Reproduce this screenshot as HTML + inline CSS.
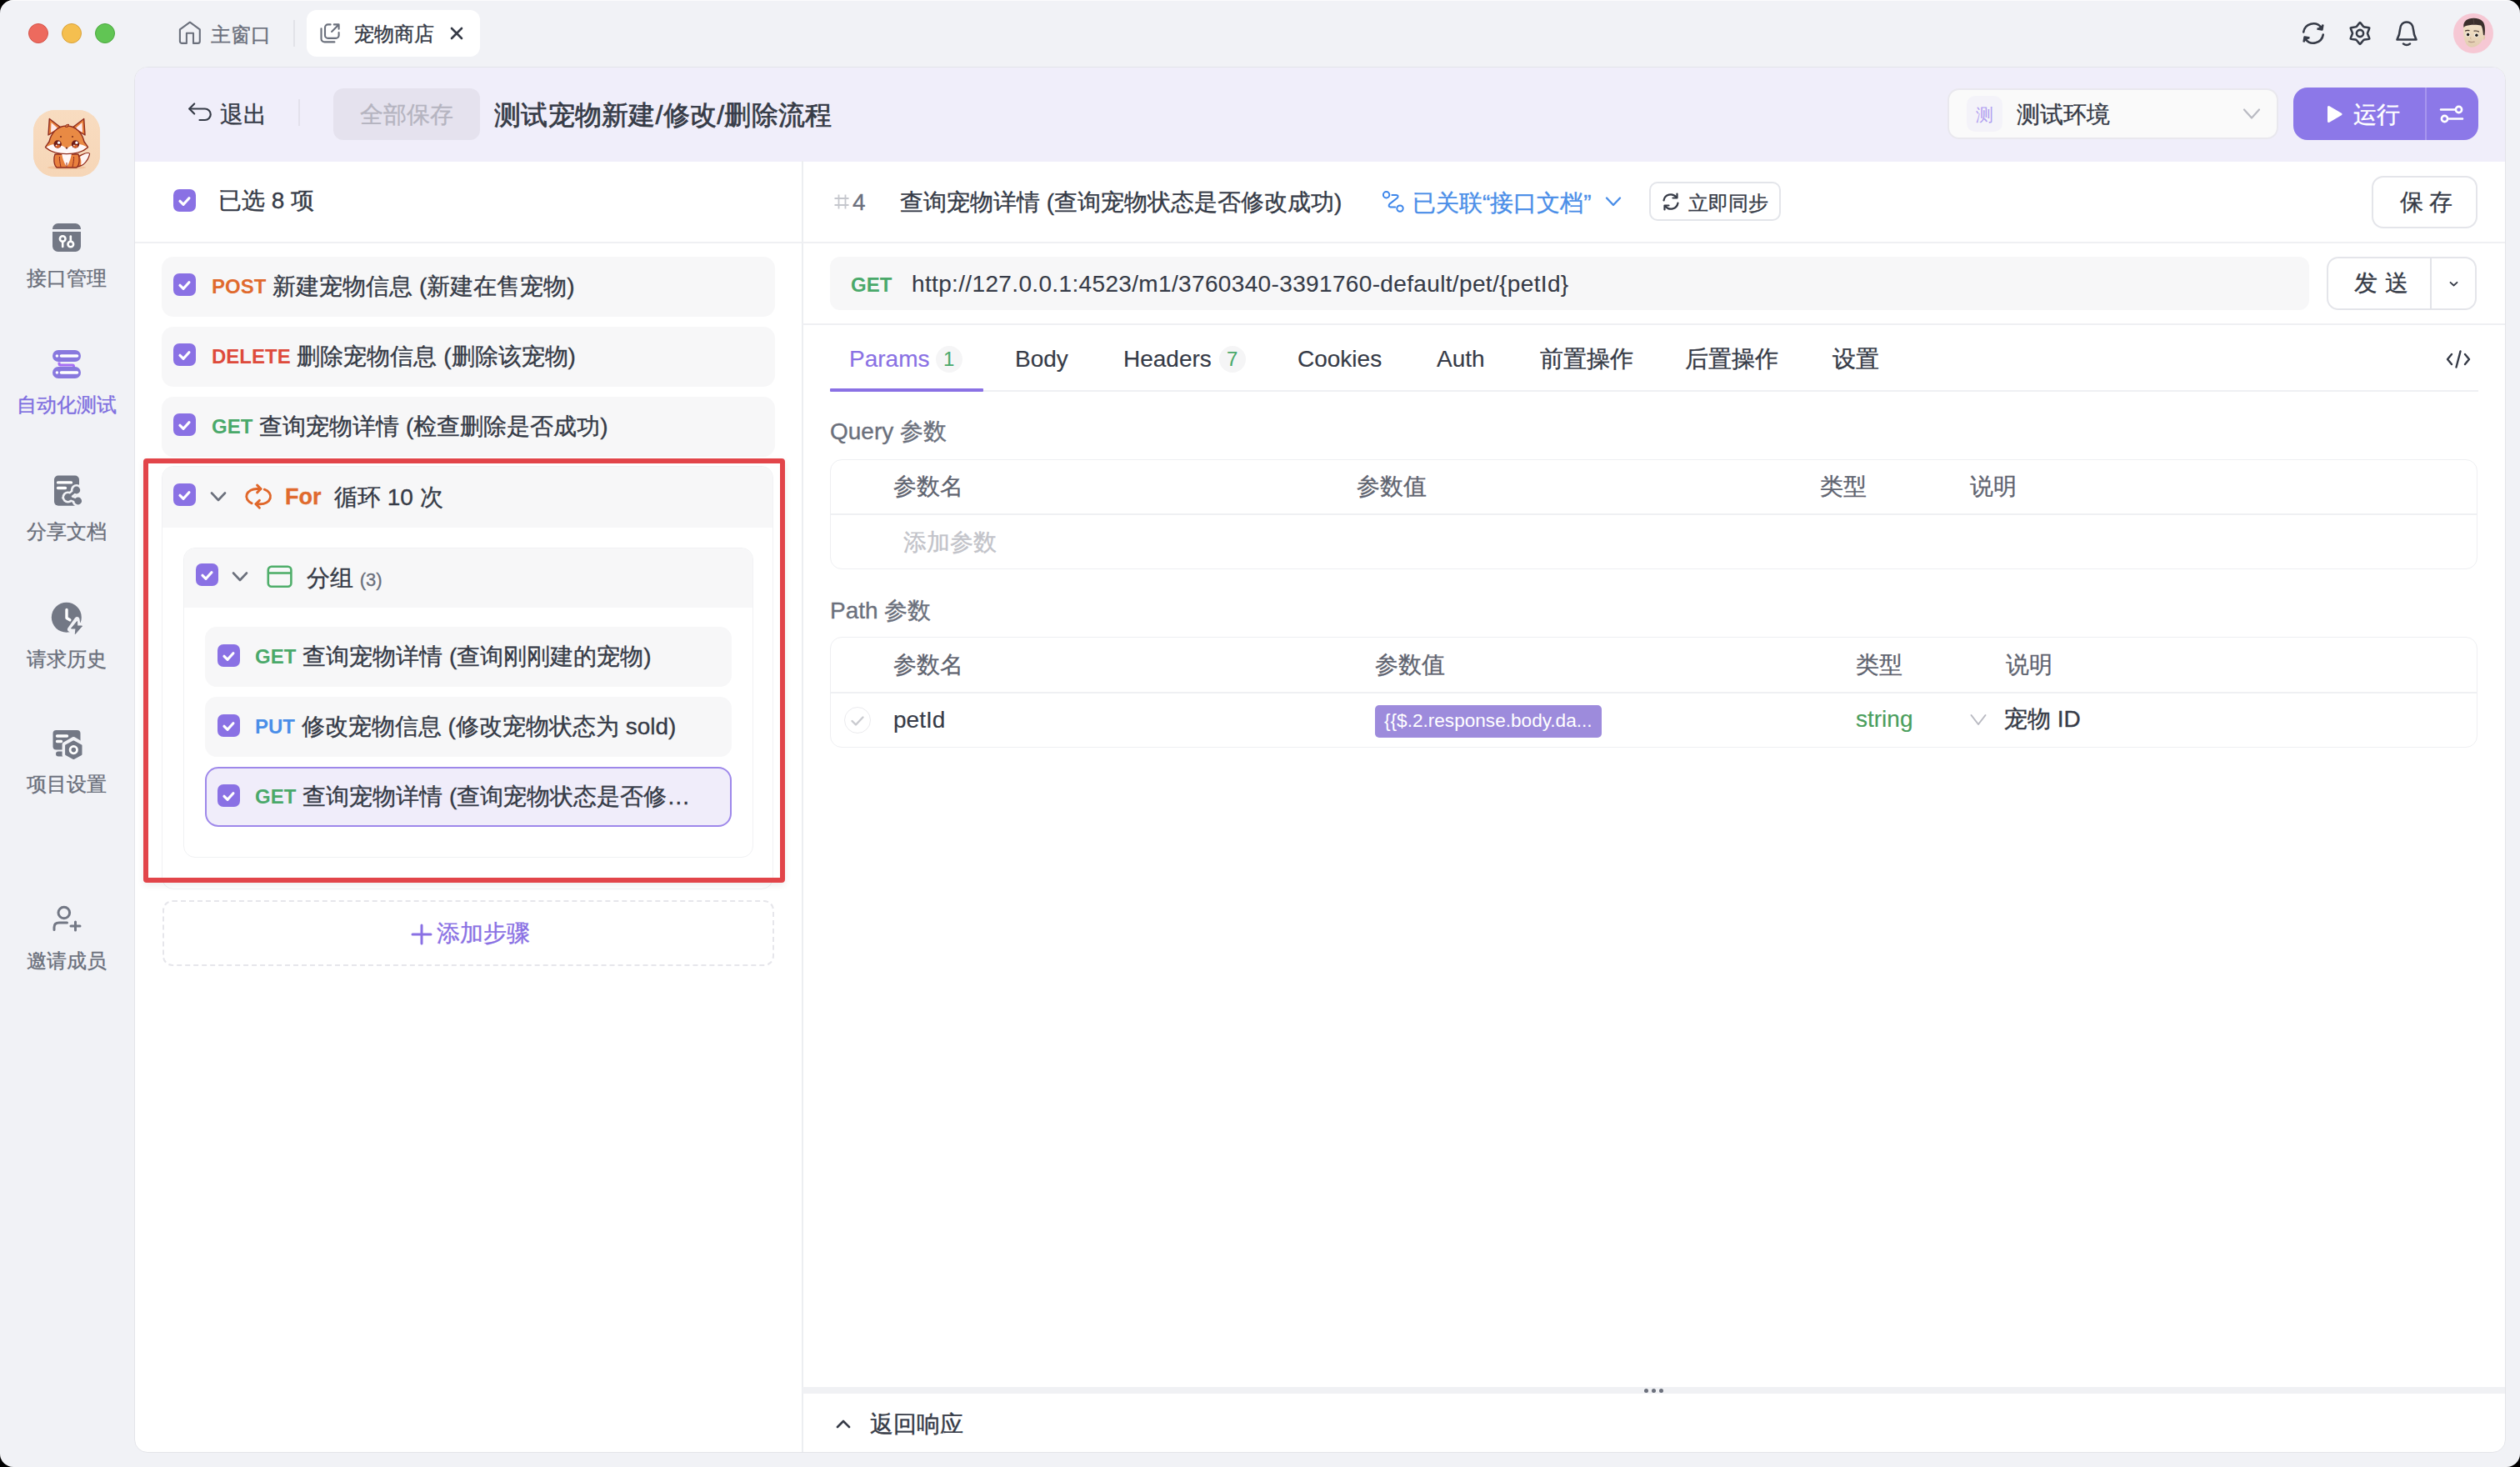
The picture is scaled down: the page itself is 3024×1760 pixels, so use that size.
<!DOCTYPE html>
<html><head><meta charset="utf-8">
<style>
*{box-sizing:border-box;margin:0;padding:0}
html,body{width:3024px;height:1760px;overflow:hidden;background:#000}
body{font-family:"Liberation Sans",sans-serif;color:#363b47;position:relative}
.win{position:absolute;left:0;top:0;width:3024px;height:1760px;border-radius:16px;background:#f1f2f6;overflow:hidden;box-shadow:inset 0 1px 0 rgba(255,255,255,0.7)}
.a{position:absolute;white-space:nowrap;line-height:1;-webkit-text-stroke-width:0.35px}
svg{position:absolute;overflow:visible}
.dot{position:absolute;width:24px;height:24px;border-radius:50%}
.panel{position:absolute;left:161px;top:80px;width:2846px;height:1663px;background:#fff;border:1.5px solid #e3e4e9;border-radius:16px;overflow:hidden}
.hdr{position:absolute;left:0;top:0;width:100%;height:113px;background:#f0eefa}
.side-t{font-size:24px;color:#6b707c;text-align:center;width:160px;left:0}
.card{position:absolute;background:#f7f7f8;border-radius:14px}
.cb{position:absolute;width:27px;height:27px;border-radius:7px;background:#8a71e4}

.m{font-weight:bold;font-size:24px;position:relative;top:-1.5px;-webkit-text-stroke-width:0}
.rt{font-size:28px;color:#363b47}
.th{font-size:28px;color:#5f6470;-webkit-text-stroke:0.3px #5f6470}
.sep{position:absolute;height:2px;background:#eff0f3}
</style></head>
<body>
<div class="win">
  <!-- traffic lights -->
  <div class="dot" style="left:34px;top:28px;background:#ed6a5e;border:1px solid #d4544a"></div>
  <div class="dot" style="left:74px;top:28px;background:#f5bf4f;border:1px solid #d9a23a"></div>
  <div class="dot" style="left:114px;top:28px;background:#61c554;border:1px solid #4aa83e"></div>

  <!-- tabs -->
  <svg style="left:205px;top:18px" width="50" height="44" viewBox="0 0 50 44"><path d="M13.5 33.9H18.9V21.7H27V33.9H32.3A2.5 2.5 0 0 0 34.8 31.4V17.4L22.9 8.7L10.9 17.4V31.4A2.5 2.5 0 0 0 13.5 33.9Z" fill="none" stroke="#6b707c" stroke-width="2.1" stroke-linejoin="round"/></svg>
  <div class="a" style="left:253px;top:29.5px;font-size:24px;color:#6b707c">主窗口</div>
  <div style="position:absolute;left:352px;top:24px;width:2px;height:32px;background:#e2e3e8"></div>
  <div style="position:absolute;left:368px;top:12px;width:208px;height:56px;background:#fff;border-radius:12px"></div>
  <svg style="left:375px;top:18px" width="50" height="44" viewBox="0 0 50 44"><path d="M21.6 11.4H18.5A3.5 3.5 0 0 0 15 14.9V24.4A3.5 3.5 0 0 0 18.5 27.9H28.1A3.5 3.5 0 0 0 31.6 24.4V21" fill="none" stroke="#6b707c" stroke-width="2.1" stroke-linecap="round"/><path d="M23.1 19.9L31 12M25.8 11.4H31.6V16.8" fill="none" stroke="#6b707c" stroke-width="2.1" stroke-linecap="round" stroke-linejoin="round"/><path d="M10.5 16.3V28.4A4 4 0 0 0 14.5 32.4H26.4" fill="none" stroke="#6b707c" stroke-width="2.1" stroke-linecap="round"/></svg>
  <div class="a" style="left:425px;top:29px;font-size:24px;color:#363b47">宠物商店</div>
  <svg style="left:541px;top:33px" width="14" height="14" viewBox="0 0 14 14"><path d="M1 1L13 13M13 1L1 13" stroke="#363b47" stroke-width="2.6" stroke-linecap="round"/></svg>

  <!-- top right icons -->
  <svg style="left:2762px;top:26px" width="28" height="28" viewBox="0 0 28 28"><path d="M2.2 12.5A12 12 0 0 1 23.5 7" fill="none" stroke="#363b47" stroke-width="2.6" stroke-linecap="round"/><path d="M25.5 3.5L24.5 9.5L18.5 8.5" fill="#363b47" stroke="#363b47" stroke-width="2.4" stroke-linejoin="round"/><path d="M25.8 15.5A12 12 0 0 1 4.5 21" fill="none" stroke="#363b47" stroke-width="2.6" stroke-linecap="round"/><path d="M2.5 24.5L3.5 18.5L9.5 19.5" fill="#363b47" stroke="#363b47" stroke-width="2.4" stroke-linejoin="round"/></svg>
  <svg style="left:2818px;top:25px" width="28" height="30" viewBox="0 0 28 30"><path d="M14.00 2.00C14.75 2.00 17.56 6.66 18.50 7.21C19.44 7.75 24.88 7.85 25.26 8.50C25.63 9.15 23.00 13.92 23.00 15.00C23.00 16.08 25.63 20.85 25.26 21.50C24.88 22.15 19.44 22.25 18.50 22.79C17.56 23.34 14.75 28.00 14.00 28.00C13.25 28.00 10.44 23.34 9.50 22.79C8.56 22.25 3.12 22.15 2.74 21.50C2.37 20.85 5.00 16.08 5.00 15.00C5.00 13.92 2.37 9.15 2.74 8.50C3.12 7.85 8.56 7.75 9.50 7.21C10.44 6.66 13.25 2.00 14.00 2.00Z" fill="none" stroke="#363b47" stroke-width="2.6" stroke-linejoin="round"/><circle cx="14" cy="15" r="4.1" fill="none" stroke="#363b47" stroke-width="2.6"/></svg>
  <svg style="left:2874px;top:24px" width="28" height="32" viewBox="0 0 28 32"><path d="M14 2.5C9 2.5 6.3 6.5 6 11.5C5.7 16.5 4.6 19.5 2.5 23.5H25.5C23.4 19.5 22.3 16.5 22 11.5C21.7 6.5 19 2.5 14 2.5Z" fill="none" stroke="#363b47" stroke-width="2.6" stroke-linejoin="round"/><path d="M10 28.5Q14 31.5 18 28.5" fill="none" stroke="#363b47" stroke-width="2.6" stroke-linecap="round"/></svg>
  <div style="position:absolute;left:2944px;top:16px;width:48px;height:48px;border-radius:50%;background:#f6c8d4;overflow:hidden">
    <svg style="left:0;top:0" width="48" height="48" viewBox="0 0 48 48">
      <defs><linearGradient id="sk" x1="0" y1="0" x2="0" y2="1"><stop offset="0" stop-color="#f1e0c6"/><stop offset="1" stop-color="#e2ccb0"/></linearGradient></defs>
      <path d="M36 27C38.5 26 39 30 36.5 32.5Z" fill="#e0c6a6"/>
      <path d="M12.2 16C11.5 24 12.5 33 16 37.5C18.5 40.5 21 41 24 40.5C29 39.5 34 35 36 30C37.5 25 37.5 19 36 15C32 13 18 13 12.2 16Z" fill="url(#sk)"/>
      <path d="M12.5 17C11.5 12 14 8 19 6.5C25 5 32 6 35.5 10C38 13 38.5 20 37.5 26.5L36 26C35.5 21 35 16.5 33 14.5C28 13 18 13.5 14 15.5Z" fill="#3b2f2b"/>
      <path d="M24 6.5L25 13.5" stroke="#5a4a44" stroke-width="0.8"/>
      <path d="M14.5 21Q16.5 19.8 19 20.6M25 21.2Q28 20.6 30.5 22" fill="none" stroke="#4a3a34" stroke-width="1.2" stroke-linecap="round"/>
      <ellipse cx="17.4" cy="25.4" rx="2.8" ry="2.2" fill="#f4f0ea"/><ellipse cx="27.7" cy="26.2" rx="2.8" ry="2.2" fill="#f4f0ea"/>
      <circle cx="17.6" cy="25.5" r="1.7" fill="#1e1a18"/><circle cx="27.9" cy="26.3" r="1.7" fill="#1e1a18"/>
      <path d="M20.8 28.5Q20 31 21.5 31.2" fill="none" stroke="#cdb392" stroke-width="1"/>
      <path d="M18.5 33.8Q22 35.2 25.2 34.2" fill="none" stroke="#b89a88" stroke-width="1.4" stroke-linecap="round"/>
    </svg>
  </div>

  <!-- SIDEBAR -->
  <div style="position:absolute;left:40px;top:132px;width:80px;height:80px;border-radius:26px;background:#f7d9bc;overflow:hidden"><svg style="left:0;top:0" width="80" height="80" viewBox="0 0 80 80">
<defs><linearGradient id="fg" x1="0" y1="0" x2="0" y2="1"><stop offset="0" stop-color="#f8dcc0"/><stop offset="1" stop-color="#f6d6b7"/></linearGradient></defs>
<rect width="80" height="80" fill="url(#fg)"/>
<ellipse cx="40" cy="69" rx="23" ry="2.2" fill="#f0b98f" opacity="0.7"/>
<path d="M52 57C58 53 66 50 67.5 52.5C66 60 60 68 52 68Z" fill="#e87a3a" stroke="#8e2b1e" stroke-width="1.3" stroke-linejoin="round"/>
<path d="M56 56C60 53 65 51 67 52.5C65.5 59 61 65 57 66C58 62 57 59 56 56Z" fill="#fff4f2"/>
<path d="M26 53C24 58 24.5 66 28 69H52C55.5 66 56 58 54 53Z" fill="#e9803e" stroke="#8e2b1e" stroke-width="1.3" stroke-linejoin="round"/>
<path d="M34 52C35 58 37 64 40 68C43 64 45 58 46 52Z" fill="#fff6f6"/>
<path d="M33 68.5C32 63 31 59 31.5 56M47 68.5C48 63 49 59 48.5 56M40 68.5V63" fill="none" stroke="#8e2b1e" stroke-width="1"/>
<path d="M18 30L19.3 10.5L33 21Z" fill="#e8803a" stroke="#8e2b1e" stroke-width="1.4" stroke-linejoin="round"/>
<path d="M21 27L21.5 15L29.5 22Z" fill="#fde9ea"/>
<path d="M62 30L60.7 10.5L47 21Z" fill="#e8803a" stroke="#8e2b1e" stroke-width="1.4" stroke-linejoin="round"/>
<path d="M59 27L58.5 15L50.5 22Z" fill="#fde9ea"/>
<path d="M40 19C28 19 21 29 19 38C17 41 15 43 14.5 44.8C20 50 30 52.5 40 52.5C50 52.5 60 50 65.5 44.8C65 43 63 41 61 38C59 29 52 19 40 19Z" fill="#e98a44" stroke="#8e2b1e" stroke-width="1.4" stroke-linejoin="round"/>
<path d="M15.5 44.6C22 40 30 39 40 46C50 39 58 40 64.5 44.6C58 50 50 52 40 52C30 52 22 50 15.5 44.6Z" fill="#fff7f8"/>
<circle cx="29.2" cy="41" r="4.7" fill="#6e1c18"/><circle cx="50.5" cy="41" r="4.7" fill="#6e1c18"/>
<ellipse cx="29.2" cy="43.6" rx="3" ry="1.8" fill="#d9622a"/><ellipse cx="50.5" cy="43.6" rx="3" ry="1.8" fill="#d9622a"/>
<circle cx="30.6" cy="39.2" r="1.6" fill="#fff"/><circle cx="51.9" cy="39.2" r="1.6" fill="#fff"/>
<circle cx="27.6" cy="42.4" r="0.8" fill="#fff"/><circle cx="48.9" cy="42.4" r="0.8" fill="#fff"/>
<path d="M39 45.2H41L40 46.6Z" fill="#5a1a14" stroke="#5a1a14" stroke-width="0.8" stroke-linejoin="round"/>
<circle cx="33" cy="32" r="0.9" fill="#6e2418"/><circle cx="47" cy="32" r="0.9" fill="#6e2418"/>
<path d="M38 20C39 17.5 41 17 43 17.5C41.5 18.5 41 19.5 41 20.5Z" fill="#e98a44" stroke="#8e2b1e" stroke-width="1" stroke-linejoin="round"/>
</svg></div>

  <div class="a side-t" style="top:322px">接口管理</div>
  <div class="a side-t" style="top:473.5px;color:#7f6fe0">自动化测试</div>
  <div class="a side-t" style="top:626px">分享文档</div>
  <div class="a side-t" style="top:779px">请求历史</div>
  <div class="a side-t" style="top:929px">项目设置</div>
  <div class="a side-t" style="top:1141px">邀请成员</div>
  <!-- icon: interface -->
  <svg style="left:63px;top:267px" width="34" height="35" viewBox="0 0 34 35"><path d="M0 7.5A6.5 6.5 0 0 1 6.5 1H27.5A6.5 6.5 0 0 1 34 7.5V8H0Z" fill="#737885"/><path d="M0 11H34V28.5A6.5 6.5 0 0 1 27.5 35H6.5A6.5 6.5 0 0 1 0 28.5Z" fill="#737885"/><circle cx="12.2" cy="19.5" r="3.3" fill="none" stroke="#fff" stroke-width="2.6"/><path d="M12.2 22.8V29" stroke="#fff" stroke-width="2.6" stroke-linecap="round"/><circle cx="21.8" cy="26" r="3.3" fill="none" stroke="#fff" stroke-width="2.6"/><path d="M21.8 22.7V16.5" stroke="#fff" stroke-width="2.6" stroke-linecap="round"/></svg>
  <!-- icon: automation -->
  <svg style="left:63px;top:420px" width="34" height="34" viewBox="0 0 34 34"><path d="M8 14.5V16.5Q8 18 9.5 18H24Q25.5 18 25.5 19.5V21" fill="none" stroke="#a66ef5" stroke-width="3"/><rect x="0" y="0" width="34" height="14" rx="7" fill="#8878de"/><rect x="0" y="20" width="34" height="14" rx="7" fill="#8878de"/><circle cx="5.4" cy="7" r="1.8" fill="#fff"/><path d="M10.5 7H29.5" stroke="#fff" stroke-width="3.6" stroke-linecap="round"/><circle cx="5.4" cy="27" r="1.8" fill="#fff"/><path d="M10.5 27H29.5" stroke="#fff" stroke-width="3.6" stroke-linecap="round"/></svg>
  <!-- icon: share doc -->
  <svg style="left:50px;top:560px" width="60" height="60" viewBox="0 0 60 60"><defs><mask id="m1"><rect width="60" height="60" fill="#fff"/><circle cx="41.8" cy="28" r="7" fill="#000"/><circle cx="31.5" cy="36.5" r="7" fill="#000"/><circle cx="43.7" cy="41" r="7" fill="#000"/><path d="M41.8 28L31.5 36.5L43.7 41" fill="none" stroke="#000" stroke-width="8"/></mask></defs><rect x="15" y="10.6" width="30" height="36.2" rx="5" fill="#737885" mask="url(#m1)"/><path d="M19.5 18.9H35.5M19.5 25.5H28.5" stroke="#fff" stroke-width="3.4" stroke-linecap="round"/><circle cx="41.8" cy="28" r="4.4" fill="#737885"/><circle cx="31.5" cy="36.5" r="4.4" fill="#737885"/><circle cx="43.7" cy="41" r="4.4" fill="#737885"/><path d="M41.8 28L31.5 36.5L43.7 41" fill="none" stroke="#737885" stroke-width="3"/></svg>
  <!-- icon: history -->
  <svg style="left:50px;top:712px" width="60" height="60" viewBox="0 0 60 60"><defs><mask id="m2"><rect width="60" height="60" fill="#fff"/><path d="M42.5 31L34 43H40.5L39.5 51L50.5 38H43.5Z" stroke="#000" stroke-width="6" stroke-linejoin="round" fill="#000"/></mask></defs><circle cx="29.8" cy="28.7" r="18" fill="#737885" mask="url(#m2)"/><path d="M30 19.5V29.5L33.8 31.8" fill="none" stroke="#fff" stroke-width="3.4" stroke-linecap="round" stroke-linejoin="round"/><path d="M42.5 33.5L35.5 42H41L40.3 48.5L48.5 39H42.8Z" fill="#737885" stroke="#737885" stroke-width="1" stroke-linejoin="round"/></svg>
  <!-- icon: project settings -->
  <svg style="left:50px;top:862px" width="60" height="60" viewBox="0 0 60 60"><defs><mask id="m3"><rect width="60" height="60" fill="#fff"/><path d="M38.3 24.5L49.5 31V44L38.3 50.5L27.1 44V31Z" fill="#000" stroke="#000" stroke-width="5" stroke-linejoin="round"/></mask></defs><g mask="url(#m3)"><rect x="13.5" y="14" width="33" height="23.5" rx="4" fill="#737885"/><rect x="17" y="39.5" width="12" height="6" rx="3" fill="#737885"/></g><path d="M18.5 21H30.5M18.5 27.5H23.5" stroke="#fff" stroke-width="3.4" stroke-linecap="round"/><path d="M38.3 27.5L47.5 32.5V43L38.3 48L29.1 43V32.5Z" fill="#737885" stroke="#737885" stroke-width="2" stroke-linejoin="round"/><circle cx="38.3" cy="37.6" r="4.2" fill="none" stroke="#fff" stroke-width="2.8"/></svg>
  <!-- icon: invite -->
  <svg style="left:50px;top:1072px" width="60" height="60" viewBox="0 0 60 60"><circle cx="26.8" cy="23" r="6.8" fill="none" stroke="#737885" stroke-width="3"/><path d="M15 43.5V40.5Q15 35 21 35H30.5" fill="none" stroke="#737885" stroke-width="3" stroke-linecap="round"/><path d="M40.5 34V44M35 39H46" stroke="#737885" stroke-width="3" stroke-linecap="round"/></svg>

  <!-- MAIN PANEL -->
  <div class="panel">
    <div class="hdr"></div>
  </div>
  <!-- header content (absolute page coords) -->
  <svg style="left:220px;top:116px" width="40" height="36" viewBox="0 0 40 36"><path d="M13.2 8.5L7.2 14.5L13.2 20.5" fill="none" stroke="#363b47" stroke-width="2.2" stroke-linecap="round" stroke-linejoin="round"/><path d="M7.5 14.5H26A6.75 6.75 0 0 1 26 28H19.5" fill="none" stroke="#363b47" stroke-width="2.2" stroke-linecap="round"/></svg>
  <div class="a" style="left:264px;top:124px;font-size:28px;color:#363b47">退出</div>
  <div style="position:absolute;left:358px;top:119px;width:2px;height:32px;background:#e3e1ec"></div>
  <div style="position:absolute;left:400px;top:106px;width:176px;height:62px;border-radius:12px;background:#e5e2ee"></div>
  <div class="a" style="left:432px;top:123.5px;font-size:28px;color:#b5b4c0">全部保存</div>
  <div class="a" style="left:593px;top:122px;font-size:32px;color:#363b47;-webkit-text-stroke-width:0.7px;letter-spacing:0.25px">测试宠物新建/修改/删除流程</div>

  <div style="position:absolute;left:2337px;top:106px;width:397px;height:61px;border-radius:14px;background:#fafafa;border:2px solid #e9e8ee"></div>
  <div style="position:absolute;left:2360px;top:115px;width:43px;height:43px;border-radius:10px;background:#f4f3f9"></div>
  <div class="a" style="left:2371px;top:127px;font-size:21px;color:#b09ef0;-webkit-text-stroke-width:0">测</div>
  <div class="a" style="left:2420px;top:124px;font-size:28px;color:#363b47">测试环境</div>
  <svg style="left:2691px;top:129px" width="22" height="16" viewBox="0 0 22 16"><path d="M2 2.5L11 12.5L20 2.5" fill="none" stroke="#b9bac2" stroke-width="2.2" stroke-linecap="round" stroke-linejoin="round"/></svg>
  <div style="position:absolute;left:2752px;top:105px;width:222px;height:63px;border-radius:17px;background:#8c78e8"></div>
  <div style="position:absolute;left:2910px;top:105px;width:1.5px;height:63px;background:#a796ee"></div>
  <svg style="left:2792px;top:126px" width="19" height="22" viewBox="0 0 19 22"><path d="M2.5 2.5V19.5L17 11Z" fill="#fff" stroke="#fff" stroke-width="3" stroke-linejoin="round"/></svg>
  <div class="a" style="left:2824px;top:124px;font-size:28px;color:#fff">运行</div>
  <svg style="left:2927px;top:124px" width="30" height="26" viewBox="0 0 30 26"><path d="M2 7.5H19M12 18.5H28" stroke="#fff" stroke-width="2.6" stroke-linecap="round"/><circle cx="23.5" cy="7.5" r="3.6" fill="none" stroke="#fff" stroke-width="2.6"/><circle cx="6.5" cy="18.5" r="3.6" fill="none" stroke="#fff" stroke-width="2.6"/></svg>

  <!-- LEFT PANEL -->
  <div style="position:absolute;left:962px;top:193px;width:1.5px;height:1549px;background:#eceef1"></div>
<div class="cb" style="left:207.5px;top:227px"><svg style="left:0;top:0" width="27" height="27" viewBox="0 0 27 27"><path d="M8 14.3L12.1 18.3L18.9 10.8" fill="none" stroke="#fff" stroke-width="3.2" stroke-linecap="round" stroke-linejoin="round"/></svg></div>
  <div class="a rt" style="left:262px;top:227px">已选 8 项</div>
  <div class="sep" style="left:162px;top:290px;width:800px"></div>
<div class="card" style="left:194px;top:308px;width:736px;height:72px"></div><div class="cb" style="left:207.5px;top:328px"><svg style="left:0;top:0" width="27" height="27" viewBox="0 0 27 27"><path d="M8 14.3L12.1 18.3L18.9 10.8" fill="none" stroke="#fff" stroke-width="3.2" stroke-linecap="round" stroke-linejoin="round"/></svg></div><div class="a rt" style="left:254px;top:330px"><span class="m" style="color:#e06a2e">POST</span> 新建宠物信息 (新建在售宠物)</div><div class="card" style="left:194px;top:392px;width:736px;height:72px"></div><div class="cb" style="left:207.5px;top:412px"><svg style="left:0;top:0" width="27" height="27" viewBox="0 0 27 27"><path d="M8 14.3L12.1 18.3L18.9 10.8" fill="none" stroke="#fff" stroke-width="3.2" stroke-linecap="round" stroke-linejoin="round"/></svg></div><div class="a rt" style="left:254px;top:414px"><span class="m" style="color:#de4b3c">DELETE</span> 删除宠物信息 (删除该宠物)</div><div class="card" style="left:194px;top:476px;width:736px;height:72px"></div><div class="cb" style="left:207.5px;top:496px"><svg style="left:0;top:0" width="27" height="27" viewBox="0 0 27 27"><path d="M8 14.3L12.1 18.3L18.9 10.8" fill="none" stroke="#fff" stroke-width="3.2" stroke-linecap="round" stroke-linejoin="round"/></svg></div><div class="a rt" style="left:254px;top:498px"><span class="m" style="color:#4aa96a">GET</span> 查询宠物详情 (检查删除是否成功)</div>
  <!-- For block -->
  <div style="position:absolute;left:194px;top:559px;width:734px;height:508px;border:1.5px solid #f0f1f3;border-radius:14px;background:#fff;overflow:hidden"><div style="height:73px;background:#f7f7f8"></div></div>
<div class="cb" style="left:207.5px;top:580px"><svg style="left:0;top:0" width="27" height="27" viewBox="0 0 27 27"><path d="M8 14.3L12.1 18.3L18.9 10.8" fill="none" stroke="#fff" stroke-width="3.2" stroke-linecap="round" stroke-linejoin="round"/></svg></div>
  <svg style="left:252px;top:589px" width="20" height="14" viewBox="0 0 20 14"><path d="M2 2.5L10 11L18 2.5" fill="none" stroke="#6b707c" stroke-width="2.6" stroke-linecap="round" stroke-linejoin="round"/></svg>
  <svg style="left:288px;top:575px" width="44" height="40" viewBox="0 0 44 40"><path d="M25 11.5H20.5A12.3 9.2 0 0 0 14.2 28.8M29.3 12.2A12.3 9.2 0 0 1 23.8 29.8H19" fill="none" stroke="#e0672b" stroke-width="2.9" stroke-linecap="round" stroke-linejoin="round"/><path d="M20.6 7.1L25 11.5L20.6 15.9M23.4 25.4L19 29.8L23.4 34.2" fill="none" stroke="#e0672b" stroke-width="2.9" stroke-linecap="round" stroke-linejoin="round"/></svg>
  <div class="a" style="left:342px;top:583px;font-size:27px;font-weight:bold;color:#e06a2e">For</div>
  <div class="a rt" style="left:401px;top:583px">循环 10 次</div>
  <!-- group block -->
  <div style="position:absolute;left:220px;top:657px;width:684px;height:372px;border:1.5px solid #f0f1f3;border-radius:14px;background:#fff;overflow:hidden"><div style="height:71px;background:#f7f7f8"></div></div>
<div class="cb" style="left:234.5px;top:676px"><svg style="left:0;top:0" width="27" height="27" viewBox="0 0 27 27"><path d="M8 14.3L12.1 18.3L18.9 10.8" fill="none" stroke="#fff" stroke-width="3.2" stroke-linecap="round" stroke-linejoin="round"/></svg></div>
  <svg style="left:278px;top:685px" width="20" height="14" viewBox="0 0 20 14"><path d="M2 2.5L10 11L18 2.5" fill="none" stroke="#6b707c" stroke-width="2.6" stroke-linecap="round" stroke-linejoin="round"/></svg>
  <svg style="left:320px;top:678px" width="32" height="28" viewBox="0 0 32 28"><rect x="1.8" y="1.8" width="27.6" height="24" rx="4" fill="none" stroke="#4fae6a" stroke-width="2.6"/><path d="M1.8 9.5H29.4" stroke="#4fae6a" stroke-width="2.6"/></svg>
  <div class="a rt" style="left:368px;top:679.5px">分组 <span style="font-size:22px;color:#6b707c">(3)</span></div>
<div class="card" style="left:246px;top:752px;width:632px;height:72px"></div><div class="cb" style="left:260.5px;top:773px"><svg style="left:0;top:0" width="27" height="27" viewBox="0 0 27 27"><path d="M8 14.3L12.1 18.3L18.9 10.8" fill="none" stroke="#fff" stroke-width="3.2" stroke-linecap="round" stroke-linejoin="round"/></svg></div><div class="a rt" style="left:306px;top:774px"><span class="m" style="color:#4aa96a">GET</span> 查询宠物详情 (查询刚刚建的宠物)</div><div class="card" style="left:246px;top:836px;width:632px;height:72px"></div><div class="cb" style="left:260.5px;top:857px"><svg style="left:0;top:0" width="27" height="27" viewBox="0 0 27 27"><path d="M8 14.3L12.1 18.3L18.9 10.8" fill="none" stroke="#fff" stroke-width="3.2" stroke-linecap="round" stroke-linejoin="round"/></svg></div><div class="a rt" style="left:306px;top:858px"><span class="m" style="color:#4a8ee8">PUT</span> 修改宠物信息 (修改宠物状态为 sold)</div><div class="card" style="left:246px;top:920px;width:632px;height:72px;background:#f0edfa;border:2px solid #9e88ea;border-radius:16px"></div><div class="cb" style="left:260.5px;top:941px"><svg style="left:0;top:0" width="27" height="27" viewBox="0 0 27 27"><path d="M8 14.3L12.1 18.3L18.9 10.8" fill="none" stroke="#fff" stroke-width="3.2" stroke-linecap="round" stroke-linejoin="round"/></svg></div><div class="a rt" style="left:306px;top:942px"><span class="m" style="color:#4aa96a">GET</span> 查询宠物详情 (查询宠物状态是否修…</div>
  <!-- red annotation -->
  <div style="position:absolute;left:172px;top:550px;width:770px;height:509px;border:6px solid #e2454a;border-radius:4px;box-shadow:0 3px 8px rgba(0,0,0,0.07)"></div>
  <!-- add step -->
  <div style="position:absolute;left:195px;top:1080px;width:734px;height:79px;border:2px dashed #e6e6eb;border-radius:12px"></div>
  <svg style="left:493px;top:1108px" width="26" height="26" viewBox="0 0 26 26"><path d="M13 2V24M2 13H24" stroke="#8a71e4" stroke-width="3" stroke-linecap="round"/></svg>
  <div class="a" style="left:524px;top:1106px;font-size:28px;color:#8a71e4">添加步骤</div>

  <!-- RIGHT PANEL -->
  <svg style="left:1001px;top:233px" width="18" height="18" viewBox="0 0 18 18"><path d="M5.5 0.5V17.5M13.5 0.5V17.5M0.5 5H17.5M0.5 13H17.5" stroke="#c5c7cd" stroke-width="1.8"/></svg>
  <div class="a" style="left:1023px;top:228.5px;font-size:28px;color:#6b707c">4</div>
  <div class="a rt" style="left:1080px;top:229px">查询宠物详情 (查询宠物状态是否修改成功)</div>
  <svg style="left:1658px;top:228px" width="28" height="28" viewBox="0 0 28 28"><circle cx="5.6" cy="5.7" r="3.7" fill="none" stroke="#3d86ea" stroke-width="2"/><circle cx="22" cy="22.1" r="3.7" fill="none" stroke="#3d86ea" stroke-width="2"/><path d="M12.4 6H17.4Q20.8 6.3 19 9.2L9.6 16.6Q7.2 19.8 10.6 20.5H16.2" fill="none" stroke="#3d86ea" stroke-width="2" stroke-linecap="round" stroke-linejoin="round"/></svg>
  <div class="a" style="left:1695px;top:229.5px;font-size:28px;color:#4a8ee8">已关联“接口文档”</div>
  <svg style="left:1926px;top:235px" width="20" height="14" viewBox="0 0 20 14"><path d="M2 2.5L10 11L18 2.5" fill="none" stroke="#4a8ee8" stroke-width="2.4" stroke-linecap="round" stroke-linejoin="round"/></svg>
  <div style="position:absolute;left:1979px;top:218px;width:158px;height:47px;border:2px solid #e3e5ea;border-radius:10px;background:#fff"></div>
  <svg style="left:1994px;top:231px" width="22" height="22" viewBox="0 0 22 22"><path d="M2.5 9.5A8.5 8.5 0 0 1 17.5 5.5" fill="none" stroke="#363b47" stroke-width="2.2" stroke-linecap="round"/><path d="M18.5 1.5V6.5H13.5" fill="none" stroke="#363b47" stroke-width="2.2" stroke-linecap="round" stroke-linejoin="round"/><path d="M19.5 12.5A8.5 8.5 0 0 1 4.5 16.5" fill="none" stroke="#363b47" stroke-width="2.2" stroke-linecap="round"/><path d="M3.5 20.5V15.5H8.5" fill="none" stroke="#363b47" stroke-width="2.2" stroke-linecap="round" stroke-linejoin="round"/></svg>
  <div class="a" style="left:2026px;top:231.5px;font-size:24px;color:#363b47">立即同步</div>
  <div style="position:absolute;left:2846px;top:211px;width:127px;height:63px;border:2px solid #e4e5ea;border-radius:14px;background:#fff"></div>
  <div class="a" style="left:2879.5px;top:229px;font-size:28px;color:#363b47;letter-spacing:7px">保存</div>
  <div class="sep" style="left:963px;top:290px;width:2043px"></div>

  <div style="position:absolute;left:996px;top:308px;width:1775px;height:64px;border-radius:12px;background:#f7f7f8"></div>
  <div class="a m" style="left:1021px;top:330px;color:#4aa96a">GET</div>
  <div class="a rt" style="left:1094px;top:327px;letter-spacing:0.35px;-webkit-text-stroke-width:0.1px">http://127.0.0.1:4523/m1/3760340-3391760-default/pet/{petId}</div>
  <div style="position:absolute;left:2792px;top:308px;width:180px;height:64px;border:2px solid #e4e5ea;border-radius:14px;background:#fff"></div>
  <div style="position:absolute;left:2916px;top:309px;width:1.5px;height:62px;background:#e2e3e8"></div>
  <div class="a" style="left:2825px;top:326px;font-size:28px;color:#363b47;letter-spacing:9px">发送</div>
  <svg style="left:2938px;top:336px" width="14" height="10" viewBox="0 0 14 10"><path d="M2.5 2.8L6.5 6.5L10.5 2.8" fill="none" stroke="#363b47" stroke-width="1.8" stroke-linecap="round" stroke-linejoin="round"/></svg>
  <div class="sep" style="left:963px;top:388px;width:2043px"></div>

  <!-- tabs -->
  <div class="a rt" style="left:1019px;top:416.5px;color:#8a71e4;-webkit-text-stroke-width:0.15px">Params</div>
  <div style="position:absolute;left:1123px;top:415px;width:32px;height:32px;border-radius:50%;background:#f5f5f6"></div>
  <div class="a" style="left:1132px;top:419px;font-size:24px;color:#4aa96a;-webkit-text-stroke-width:0.1px">1</div>
  <div class="a rt" style="left:1218px;top:416.5px;-webkit-text-stroke-width:0.15px">Body</div>
  <div class="a rt" style="left:1348px;top:416.5px;-webkit-text-stroke-width:0.15px">Headers</div>
  <div style="position:absolute;left:1463px;top:415px;width:32px;height:32px;border-radius:50%;background:#f5f5f6"></div>
  <div class="a" style="left:1472px;top:419px;font-size:24px;color:#4aa96a;-webkit-text-stroke-width:0.1px">7</div>
  <div class="a rt" style="left:1557px;top:416.5px;-webkit-text-stroke-width:0.15px">Cookies</div>
  <div class="a rt" style="left:1724px;top:416.5px;-webkit-text-stroke-width:0.15px">Auth</div>
  <div class="a rt" style="left:1848px;top:416.5px">前置操作</div>
  <div class="a rt" style="left:2022px;top:416.5px">后置操作</div>
  <div class="a rt" style="left:2199px;top:416.5px">设置</div>
  <svg style="left:2935px;top:419px" width="30" height="24" viewBox="0 0 30 24"><path d="M7 6L2 12L7 18M23 6L28 12L23 18M17.5 2.5L12.5 21.5" fill="none" stroke="#363b47" stroke-width="2.4" stroke-linecap="round" stroke-linejoin="round"/></svg>
  <div class="sep" style="left:996px;top:468px;width:1978px"></div>
  <div style="position:absolute;left:996px;top:465.5px;width:184px;height:4px;background:#8a71e4;border-radius:1px"></div>

  <!-- query params -->
  <div class="a" style="left:996px;top:504px;font-size:28px;color:#6b707c">Query 参数</div>
  <div style="position:absolute;left:996px;top:551px;width:1977px;height:132px;border:1.5px solid #eeeff2;border-radius:14px"></div>
  <div class="sep" style="left:997px;top:616px;width:1975px"></div>
  <div class="a th" style="left:1072px;top:570px">参数名</div>
  <div class="a th" style="left:1628px;top:570px">参数值</div>
  <div class="a th" style="left:2184px;top:570px">类型</div>
  <div class="a th" style="left:2364px;top:570px">说明</div>
  <div class="a" style="left:1084px;top:637px;font-size:28px;color:#c2c3c9">添加参数</div>

  <!-- path params -->
  <div class="a" style="left:996px;top:718.5px;font-size:28px;color:#6b707c">Path 参数</div>
  <div style="position:absolute;left:996px;top:764px;width:1977px;height:133px;border:1.5px solid #eeeff2;border-radius:14px"></div>
  <div class="sep" style="left:997px;top:830px;width:1975px"></div>
  <div class="a th" style="left:1072px;top:784px">参数名</div>
  <div class="a th" style="left:1650px;top:784px">参数值</div>
  <div class="a th" style="left:2227px;top:784px">类型</div>
  <div class="a th" style="left:2407px;top:784px">说明</div>
  <div style="position:absolute;left:1013px;top:848px;width:32px;height:32px;border-radius:50%;border:1.5px solid #ebebee;background:#fff"></div>
  <svg style="left:1019px;top:857px" width="20" height="16" viewBox="0 0 20 16"><path d="M3.5 8L8 12.5L16.5 3.5" fill="none" stroke="#c9cacf" stroke-width="2.4" stroke-linecap="round" stroke-linejoin="round"/></svg>
  <div class="a rt" style="left:1072px;top:850px;-webkit-text-stroke-width:0.15px">petId</div>
  <div style="position:absolute;left:1650px;top:846px;width:272px;height:39px;border-radius:5px;background:#9d8bdc"></div>
  <div class="a" style="left:1661px;top:854px;font-size:22.6px;color:#fff;-webkit-text-stroke-width:0">{{$.2.response.body.da...</div>
  <div class="a" style="left:2227px;top:849px;font-size:28px;color:#4a9e5c;-webkit-text-stroke-width:0.15px">string</div>
  <svg style="left:2363px;top:855px" width="22" height="18" viewBox="0 0 22 18"><path d="M2.5 3L11 14L19.5 3" fill="none" stroke="#b9bac2" stroke-width="2" stroke-linecap="round" stroke-linejoin="round"/></svg>
  <div class="a rt" style="left:2405px;top:849px">宠物 ID</div>

  <!-- bottom response -->
  <div style="position:absolute;left:963px;top:1664px;width:2043px;height:8px;background:#f0f1f4"></div>
  <div style="position:absolute;left:1973px;top:1666px;width:5px;height:5px;border-radius:50%;background:#6b707c"></div>
  <div style="position:absolute;left:1982px;top:1666px;width:5px;height:5px;border-radius:50%;background:#6b707c"></div>
  <div style="position:absolute;left:1991px;top:1666px;width:5px;height:5px;border-radius:50%;background:#6b707c"></div>
  <svg style="left:1002px;top:1701px" width="20" height="14" viewBox="0 0 20 14"><path d="M3 11L10 4L17 11" fill="none" stroke="#363b47" stroke-width="2.6" stroke-linecap="round" stroke-linejoin="round"/></svg>
  <div class="a rt" style="left:1044px;top:1695px;-webkit-text-stroke:0.4px #363b47">返回响应</div>
</div>
</body></html>
